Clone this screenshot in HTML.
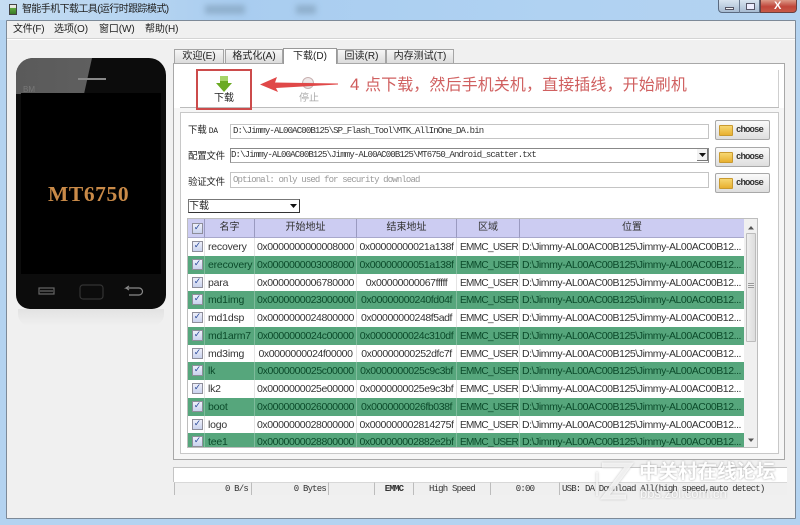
<!DOCTYPE html>
<html><head><meta charset="utf-8">
<style>
html,body{margin:0;padding:0}
body{width:800px;height:525px;overflow:hidden;position:relative;background:#b4d3f0;font-family:"Liberation Sans","Noto Sans CJK SC",sans-serif;font-size:10px;color:#222}
.a{position:absolute}
.t{position:absolute;white-space:nowrap}
.tab{position:absolute;top:49px;height:14px;box-sizing:border-box;border:1px solid #a5a5a5;border-bottom:none;background:linear-gradient(#f6f6f6,#dcdcdc);font-size:10px;line-height:14px;text-align:center;color:#222}
.in{position:absolute;left:230px;width:479px;box-sizing:border-box;background:#fff;border:1px solid #c4c4c4;font-family:"Liberation Mono",monospace;font-size:9px;letter-spacing:-.85px;line-height:13px;padding-left:2px;white-space:nowrap;overflow:hidden;color:#333}
.btn{position:absolute;left:715px;width:55px;height:20px;box-sizing:border-box;border:1px solid #a8a8a8;border-radius:2px;background:linear-gradient(#fafafa,#dedede)}
.btn i{position:absolute;left:3px;top:4px;width:14px;height:11px;background:linear-gradient(#f6d772,#e8b030);border:1px solid #c99a30;border-radius:1px;box-sizing:border-box}
.btn b{position:absolute;left:20px;top:3px;font:bold 9px/12px "Liberation Mono",monospace;letter-spacing:-.9px;color:#333}
.lb{position:absolute;left:188px;font-size:9.5px;letter-spacing:-.3px;line-height:14px;color:#222;white-space:nowrap}
.h{position:absolute;top:219px;height:19px;box-sizing:border-box;background:#ccccf2;border-right:1px solid #9a9ac0;border-bottom:1px solid #a8a8cc;text-align:center;font-size:10px;line-height:18px;color:#333}
.r{position:absolute;left:188px;width:556px;height:18px;background:#fff;color:#333;font-size:10.5px;line-height:18px;overflow:hidden}
.r.g{background:#56a67c;color:#0b4a2a}
.r s{position:absolute;top:0;height:18px;width:1px;background:#e4e4e4;text-decoration:none}
.r.g s{background:#7fbc9c}
.r span{position:absolute;top:0;white-space:nowrap}
.n{left:20px;letter-spacing:-.2px}
.st{left:67px;letter-spacing:-.42px;width:101px;text-align:center}
.en{left:169px;letter-spacing:-.42px;width:99px;text-align:center}
.r span.re{left:272px;top:1px;font-size:10px;letter-spacing:-.65px}
.lo{left:334px;letter-spacing:-.44px}
.c{position:absolute;left:4px;top:3px;width:11px;height:11px;box-sizing:border-box;background:linear-gradient(#eef0fa,#c9d2ee);border:1px solid #8e8e9a;color:#2b4a9a;font:bold 9px/9px "DejaVu Sans",sans-serif;text-align:center}
.sc{position:absolute;top:482px;height:13px;box-sizing:border-box;background:#efefef;border-left:1px solid #bcbcbc;border-top:1px solid #d8d8d8;font:9px/12px "Liberation Mono",monospace;letter-spacing:-.8px;color:#333;white-space:nowrap}
</style></head>
<body>
<!-- title bar -->
<div class="a" style="left:0;top:0;width:800px;height:20px;background:linear-gradient(90deg,#c6ddf2,#a9cdf0 30%,#b0d2f2 70%,#b4d3f0)"></div>
<div class="a" style="left:205px;top:5px;width:40px;height:9px;background:#8fafcc;filter:blur(3px)"></div>
<div class="a" style="left:296px;top:5px;width:20px;height:9px;background:#8fafcc;filter:blur(3px)"></div>
<div class="a" style="left:9px;top:4px;width:8px;height:11px;background:linear-gradient(#e8e8e0 30%,#5fa83c 35%,#3a7a28);border:1px solid #444;box-sizing:border-box"></div>
<div class="t" style="left:22px;top:3px;font-size:10px;letter-spacing:-.6px;line-height:14px;color:#222">智能手机下载工具(运行时跟踪模式)</div>
<!-- window buttons -->
<div class="a" style="left:718px;top:-1px;width:42px;height:14px;box-sizing:border-box;border:1px solid #5a6a80;border-radius:0 0 0 4px;background:linear-gradient(#d8e4f0,#a8bcd2)"></div>
<div class="a" style="left:739px;top:0;width:1px;height:13px;background:#6a7a90"></div>
<div class="a" style="left:725px;top:7px;width:9px;height:3px;background:#f2f2f2;border:1px solid #556;box-sizing:border-box"></div>
<div class="a" style="left:746px;top:3px;width:9px;height:7px;background:#eef;border:1px solid #556;box-sizing:border-box"></div>
<div class="a" style="left:760px;top:-1px;width:37px;height:14px;box-sizing:border-box;border:1px solid #6a4040;border-radius:0 0 4px 0;background:linear-gradient(#dc9a88,#c0463a 55%,#c85a48)"></div>
<div class="t" style="left:774px;top:0px;font:bold 11px/12px 'Liberation Sans',sans-serif;color:#fff">X</div>
<!-- window -->
<div class="a" style="left:6px;top:20px;width:790px;height:499px;box-sizing:border-box;background:#f0f0f0;border:1px solid #7d8a98;border-radius:1px"></div>
<div class="a" style="left:7px;top:38px;width:788px;height:1px;background:#d4d4d4"></div>
<div class="a" style="left:7px;top:39px;width:788px;height:1px;background:#fff"></div>
<div class="t" style="left:13px;top:23px;font-size:10px;letter-spacing:-.3px;line-height:14px">文件(F)</div>
<div class="t" style="left:54px;top:23px;font-size:10px;letter-spacing:-.1px;line-height:14px">选项(O)</div>
<div class="t" style="left:99px;top:23px;font-size:10px;letter-spacing:-.1px;line-height:14px">窗口(W)</div>
<div class="t" style="left:145px;top:23px;font-size:10px;letter-spacing:-.1px;line-height:14px">帮助(H)</div>
<!-- phone -->
<div class="a" style="left:18px;top:309px;width:146px;height:17px;background:linear-gradient(#e2e2e2,#f0f0f0);border-radius:0 0 12px 12px"></div>
<div class="a" style="left:16px;top:58px;width:150px;height:251px;background:#0c0c0c;border-radius:17px 17px 14px 14px;overflow:hidden">
  <svg width="150" height="40" style="position:absolute;left:0;top:0"><defs><linearGradient id="hl" x1="0" x2="1" y1="0" y2="0"><stop offset="0" stop-color="#5a5a5a"/><stop offset="1" stop-color="#5f5f5f"/></linearGradient></defs><polygon points="0,0 76,0 68,36 0,36" fill="url(#hl)"/></svg>
  <div class="a" style="left:62px;top:20px;width:28px;height:2px;background:#888"></div>
  <div class="t" style="left:7px;top:27px;font-size:8px;line-height:9px;color:#777">BM</div>
  <div class="a" style="left:5px;top:35px;width:140px;height:181px;background:#000"></div>
  <svg width="150" height="30" style="position:absolute;left:0;top:222px"><g fill="none" stroke="#666" stroke-width="1.2"><rect x="23" y="8" width="15" height="6"/><path d="M24 11h13"/><rect x="64" y="5" width="23" height="14" rx="3" stroke="#333"/><path d="M116 8h-6l3-2M110 8l3 2M113 8h10a3 3 0 0 1 0 7h-10" stroke="#888"/></g></svg>
</div>
<div class="t" style="left:48px;top:181px;font:bold 21.5px/26px 'Liberation Serif',serif;color:#c98a48;letter-spacing:.6px">MT6750</div>
<!-- tabs -->
<div class="a" style="left:173px;top:63px;width:612px;height:397px;box-sizing:border-box;border:1px solid #a8a8a8;background:#f6f6f6"></div>
<div class="a" style="left:174px;top:64px;width:610px;height:44px;background:#fff"></div>
<div class="tab" style="left:174px;width:50px">欢迎(E)</div>
<div class="tab" style="left:225px;width:58px">格式化(A)</div>
<div class="tab" style="left:283px;top:48px;width:54px;height:16px;background:#fff;border-color:#999;line-height:15px">下载(D)</div>
<div class="tab" style="left:337px;width:49px">回读(R)</div>
<div class="tab" style="left:386px;width:68px">内存测试(T)</div>
<!-- toolbar -->
<div class="a" style="left:180px;top:107px;width:599px;height:1px;background:#bcbcbc"></div>
<div class="a" style="left:778px;top:70px;width:1px;height:37px;background:#cfcfcf"></div>
<div class="a" style="left:180px;top:112px;width:599px;height:342px;box-sizing:border-box;border:1px solid #c8c8c8;background:#fff"></div>
<div class="a" style="left:196px;top:69px;width:56px;height:41px;box-sizing:border-box;border:2px solid #cc4b4b"></div>
<svg class="a" style="left:215px;top:75px" width="18" height="18"><path d="M5 1h8v7h4l-8 9-8-9h4z" fill="#6aaa22"/><path d="M5 1h8v5H5z" fill="#a6d468"/></svg>
<div class="t" style="left:214px;top:92px;font-size:10px;line-height:14px;color:#222">下载</div>
<div class="a" style="left:302px;top:77px;width:12px;height:12px;box-sizing:border-box;border-radius:50%;border:1px solid #c8b0b0;background:linear-gradient(#f0e8e8 45%,#c8c8c8 50%,#e8e8e8)"></div>
<div class="t" style="left:299px;top:92px;font-size:10px;line-height:14px;color:#aaa">停止</div>
<svg class="a" style="left:258px;top:76px" width="82" height="17"><path d="M2 8.5 L19 1 L17 6.5 L80 7.5 L80 8.5 L18 12 L20 16 Z" fill="#e04848"/></svg>
<div class="t" style="left:350px;top:75px;font-size:17px;line-height:20px;color:#cf5a5a">4</div>
<div class="t" style="left:365px;top:76px;font-size:16px;line-height:19px;color:#d06060;letter-spacing:.1px">点下载，然后手机关机，直接插线，开始刷机</div>
<!-- form -->
<div class="lb" style="top:124px">下载 <span style="font:8px 'Liberation Mono',monospace">DA</span></div>
<div class="lb" style="top:150px">配置文件</div>
<div class="lb" style="top:176px">验证文件</div>
<div class="in" style="top:124px;height:15px">D:\Jimmy-AL00AC00B125\SP_Flash_Tool\MTK_AllInOne_DA.bin</div>
<div class="in" style="top:148px;height:15px;border:1px solid #888;border-bottom-color:#aaa;line-height:13px;padding-left:0">D:\Jimmy-AL00AC00B125\Jimmy-AL00AC00B125\MT6750_Android_scatter.txt</div>
<div class="a" style="left:697px;top:149px;width:11px;height:12px;background:#f2f2f2;border-right:1px solid #777;border-bottom:1px solid #777;box-sizing:border-box"></div>
<svg class="a" style="left:699px;top:153px" width="7" height="4"><path d="M0 0h7L3.5 4z" fill="#111"/></svg>
<div class="in" style="top:172px;height:16px;color:#999;line-height:14px">Optional: only used for security download</div>
<div class="btn" style="top:120px"><i></i><b>choose</b></div>
<div class="btn" style="top:147px"><i></i><b>choose</b></div>
<div class="btn" style="top:173px"><i></i><b>choose</b></div>
<div class="a" style="left:188px;top:199px;width:112px;height:14px;box-sizing:border-box;background:#fff;border:1px solid #777;border-bottom-color:#333;border-right-color:#333;font-size:10px;line-height:13px">下载</div>
<svg class="a" style="left:290px;top:204px" width="7" height="4"><path d="M0 0h7L3.5 4z" fill="#111"/></svg>
<!-- table -->
<div class="a" style="left:187px;top:218px;width:571px;height:230px;box-sizing:border-box;border:1px solid #bdbdbd;background:#fff"></div>
<div class="h" style="left:188px;width:17px"></div>
<div class="c" style="left:192px;top:223px">✓</div>
<div class="h" style="left:205px;width:50px">名字</div>
<div class="h" style="left:255px;width:102px">开始地址</div>
<div class="h" style="left:357px;width:100px">结束地址</div>
<div class="h" style="left:457px;width:63px">区域</div>
<div class="h" style="left:520px;width:224px;border-right:none">位置</div>
<div class="r" style="top:238px"><i class="c">✓</i><s style="left:16px"></s><s style="left:66px"></s><s style="left:168px"></s><s style="left:268px"></s><s style="left:331px"></s><span class="n">recovery</span><span class="st">0x0000000000008000</span><span class="en">0x00000000021a138f</span><span class="re">EMMC_USER</span><span class="lo">D:\Jimmy-AL00AC00B125\Jimmy-AL00AC00B12...</span></div>
<div class="r g" style="top:255.8px"><i class="c">✓</i><s style="left:16px"></s><s style="left:66px"></s><s style="left:168px"></s><s style="left:268px"></s><s style="left:331px"></s><span class="n">erecovery</span><span class="st">0x0000000003008000</span><span class="en">0x00000000051a138f</span><span class="re">EMMC_USER</span><span class="lo">D:\Jimmy-AL00AC00B125\Jimmy-AL00AC00B12...</span></div>
<div class="r" style="top:273.5px"><i class="c">✓</i><s style="left:16px"></s><s style="left:66px"></s><s style="left:168px"></s><s style="left:268px"></s><s style="left:331px"></s><span class="n">para</span><span class="st">0x0000000006780000</span><span class="en">0x00000000067fffff</span><span class="re">EMMC_USER</span><span class="lo">D:\Jimmy-AL00AC00B125\Jimmy-AL00AC00B12...</span></div>
<div class="r g" style="top:291.3px"><i class="c">✓</i><s style="left:16px"></s><s style="left:66px"></s><s style="left:168px"></s><s style="left:268px"></s><s style="left:331px"></s><span class="n">md1img</span><span class="st">0x0000000023000000</span><span class="en">0x00000000240fd04f</span><span class="re">EMMC_USER</span><span class="lo">D:\Jimmy-AL00AC00B125\Jimmy-AL00AC00B12...</span></div>
<div class="r" style="top:309px"><i class="c">✓</i><s style="left:16px"></s><s style="left:66px"></s><s style="left:168px"></s><s style="left:268px"></s><s style="left:331px"></s><span class="n">md1dsp</span><span class="st">0x0000000024800000</span><span class="en">0x00000000248f5adf</span><span class="re">EMMC_USER</span><span class="lo">D:\Jimmy-AL00AC00B125\Jimmy-AL00AC00B12...</span></div>
<div class="r g" style="top:326.8px"><i class="c">✓</i><s style="left:16px"></s><s style="left:66px"></s><s style="left:168px"></s><s style="left:268px"></s><s style="left:331px"></s><span class="n">md1arm7</span><span class="st">0x0000000024c00000</span><span class="en">0x0000000024c310df</span><span class="re">EMMC_USER</span><span class="lo">D:\Jimmy-AL00AC00B125\Jimmy-AL00AC00B12...</span></div>
<div class="r" style="top:344.5px"><i class="c">✓</i><s style="left:16px"></s><s style="left:66px"></s><s style="left:168px"></s><s style="left:268px"></s><s style="left:331px"></s><span class="n">md3img</span><span class="st">0x0000000024f00000</span><span class="en">0x00000000252dfc7f</span><span class="re">EMMC_USER</span><span class="lo">D:\Jimmy-AL00AC00B125\Jimmy-AL00AC00B12...</span></div>
<div class="r g" style="top:362.3px"><i class="c">✓</i><s style="left:16px"></s><s style="left:66px"></s><s style="left:168px"></s><s style="left:268px"></s><s style="left:331px"></s><span class="n">lk</span><span class="st">0x0000000025c00000</span><span class="en">0x0000000025c9c3bf</span><span class="re">EMMC_USER</span><span class="lo">D:\Jimmy-AL00AC00B125\Jimmy-AL00AC00B12...</span></div>
<div class="r" style="top:380px"><i class="c">✓</i><s style="left:16px"></s><s style="left:66px"></s><s style="left:168px"></s><s style="left:268px"></s><s style="left:331px"></s><span class="n">lk2</span><span class="st">0x0000000025e00000</span><span class="en">0x0000000025e9c3bf</span><span class="re">EMMC_USER</span><span class="lo">D:\Jimmy-AL00AC00B125\Jimmy-AL00AC00B12...</span></div>
<div class="r g" style="top:397.8px"><i class="c">✓</i><s style="left:16px"></s><s style="left:66px"></s><s style="left:168px"></s><s style="left:268px"></s><s style="left:331px"></s><span class="n">boot</span><span class="st">0x0000000026000000</span><span class="en">0x0000000026fb038f</span><span class="re">EMMC_USER</span><span class="lo">D:\Jimmy-AL00AC00B125\Jimmy-AL00AC00B12...</span></div>
<div class="r" style="top:415.5px"><i class="c">✓</i><s style="left:16px"></s><s style="left:66px"></s><s style="left:168px"></s><s style="left:268px"></s><s style="left:331px"></s><span class="n">logo</span><span class="st">0x0000000028000000</span><span class="en">0x000000002814275f</span><span class="re">EMMC_USER</span><span class="lo">D:\Jimmy-AL00AC00B125\Jimmy-AL00AC00B12...</span></div>
<div class="r g" style="top:433.3px;height:14px"><i class="c">✓</i><s style="left:16px"></s><s style="left:66px"></s><s style="left:168px"></s><s style="left:268px"></s><s style="left:331px"></s><span class="n">tee1</span><span class="st">0x0000000028800000</span><span class="en">0x000000002882e2bf</span><span class="re">EMMC_USER</span><span class="lo">D:\Jimmy-AL00AC00B125\Jimmy-AL00AC00B12...</span></div>
<!-- scrollbar -->
<div class="a" style="left:744px;top:219px;width:13px;height:228px;background:#f0f0f0"></div>
<div class="a" style="left:746px;top:233px;width:10px;height:109px;box-sizing:border-box;border:1px solid #bcbcbc;border-radius:1px;background:linear-gradient(90deg,#eee,#ddd)"></div>
<svg class="a" style="left:748px;top:226px" width="6" height="4"><path d="M0 3.5L3 0l3 3.5z" fill="#555"/></svg>
<svg class="a" style="left:748px;top:438px" width="6" height="4"><path d="M0 .5L3 4l3-3.5z" fill="#555"/></svg>
<div class="a" style="left:748px;top:283px;width:6px;height:5px;background:repeating-linear-gradient(#999 0 1px,#eee 1px 2px)"></div>
<!-- status -->
<div class="a" style="left:173px;top:467px;width:614px;height:15px;box-sizing:border-box;background:#fff;border-top:1px solid #c4c4c4;border-left:1px solid #c4c4c4"></div>
<div class="sc" style="left:174px;width:77px;text-align:right;padding-right:3px">0 B/s</div>
<div class="sc" style="left:251px;width:77px;text-align:right;padding-right:2px">0 Bytes</div>
<div class="sc" style="left:328px;width:46px"></div>
<div class="sc" style="left:374px;width:39px;text-align:center;font-weight:bold">EMMC</div>
<div class="sc" style="left:413px;width:77px;text-align:center">High Speed</div>
<div class="sc" style="left:490px;width:69px;text-align:center">0:00</div>
<div class="sc" style="left:559px;width:228px;padding-left:2px">USB: DA Download All(high speed,auto detect)</div>
<!-- watermark -->
<svg class="a" style="left:592px;top:460px;filter:drop-shadow(0 0 1px #aaa)" width="42" height="44"><path d="M10 5h27L13 37h21" fill="none" stroke="#fff" stroke-width="5" opacity=".75"/><path d="M5 12v24" fill="none" stroke="#fff" stroke-width="2" opacity=".6"/></svg>
<div class="t" style="left:639px;top:461px;font-size:19.5px;line-height:22px;font-weight:bold;color:#fff;opacity:.92;text-shadow:0 0 2px #999">中关村在线论坛</div>
<div class="t" style="left:640px;top:487px;font-size:13px;line-height:14px;color:#fff;opacity:.6;text-shadow:0 0 2px #888">bbs.zol.com.cn</div>
</body></html>
